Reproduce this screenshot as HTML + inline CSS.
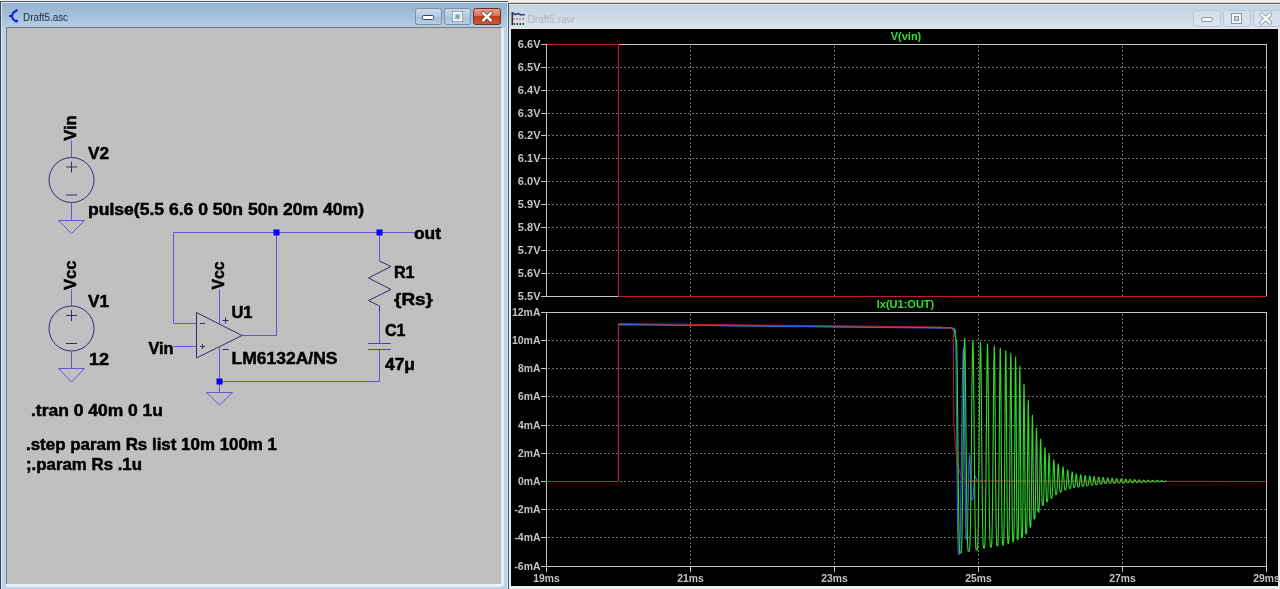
<!DOCTYPE html>
<html><head><meta charset="utf-8">
<style>
html,body{margin:0;padding:0;width:1280px;height:589px;overflow:hidden;background:#f2f0e8;}
body{position:relative;font-family:"Liberation Sans",sans-serif;}
.abs{position:absolute;}
svg{position:absolute;left:0;top:0;will-change:transform;}
</style></head><body>

<svg width="1280" height="589" viewBox="0 0 1280 589" font-family="Liberation Sans, sans-serif">
<defs>
<linearGradient id="tbA" x1="0" y1="0" x2="0" y2="1">
<stop offset="0" stop-color="#93b3d0"/><stop offset="1" stop-color="#b3cde5"/></linearGradient>
<linearGradient id="tbI" x1="0" y1="0" x2="0" y2="1">
<stop offset="0" stop-color="#c3d3e3"/><stop offset="1" stop-color="#d9e3eb"/></linearGradient>
<linearGradient id="btnA" x1="0" y1="0" x2="0" y2="1">
<stop offset="0" stop-color="#c9daec"/><stop offset="0.5" stop-color="#b5cbe2"/><stop offset="0.55" stop-color="#a6bfd9"/><stop offset="1" stop-color="#b9d2ea"/></linearGradient>
<linearGradient id="btnC" x1="0" y1="0" x2="0" y2="1">
<stop offset="0" stop-color="#e8a093"/><stop offset="0.45" stop-color="#d8735f"/><stop offset="0.5" stop-color="#c33c1f"/><stop offset="1" stop-color="#d4582e"/></linearGradient>
<linearGradient id="btnI" x1="0" y1="0" x2="0" y2="1">
<stop offset="0" stop-color="#d3dfeb"/><stop offset="1" stop-color="#d9e4ee"/></linearGradient>
</defs>
<rect x="0" y="0" width="1280" height="589" fill="#f2f0e6"/>
<rect x="0" y="1" width="509" height="588" fill="#bfd0ea"/>
<rect x="0" y="0" width="508" height="1" fill="#f0eef2"/>
<rect x="0" y="1" width="509" height="1" fill="#4e565e"/>
<rect x="0" y="1" width="1" height="588" fill="#3c4a4c"/>
<rect x="1" y="2" width="1" height="587" fill="#d8e8f2"/>
<rect x="508" y="1" width="1" height="588" fill="#3c4a4c"/>
<rect x="507" y="2" width="1" height="587" fill="#d8e8f2"/>
<rect x="1" y="2" width="507" height="1" fill="#e0eaf2"/>
<rect x="2" y="3" width="505" height="24" fill="url(#tbA)"/>
<rect x="6" y="27" width="496" height="558" fill="#727a7e"/>
<rect x="501" y="28" width="3" height="558" fill="#e8eef6"/>
<rect x="7" y="28" width="494" height="556" fill="#c0c0c0"/>
<rect x="6" y="584" width="496" height="3" fill="#e8f0f8"/>
<text x="23" y="21" font-size="10.8" fill="#1e2a36" textLength="45" lengthAdjust="spacingAndGlyphs">Draft5.asc</text>
<path d="M17.5 10 Q12 12.5 12 16 Q12 19.5 16.5 21.5" stroke="#1020e0" stroke-width="2" fill="none"/>
<path d="M9 16 L13 16" stroke="#1020e0" stroke-width="2" /><circle cx="16.5" cy="21" r="1.6" fill="#1020e0"/>
<rect x="415.5" y="8.5" width="26" height="16" rx="2" fill="url(#btnA)" stroke="#7c8fa6" stroke-width="1"/>
<rect x="444.5" y="8.5" width="26" height="16" rx="2" fill="url(#btnA)" stroke="#7c8fa6" stroke-width="1"/>
<rect x="473.5" y="8.5" width="27" height="16" rx="2" fill="url(#btnC)" stroke="#6b2f2a" stroke-width="1"/>
<rect x="422.5" y="15.5" width="11" height="4" rx="1" fill="#ffffff" stroke="#3a4a5c" stroke-width="1"/>
<rect x="452.5" y="11.5" width="10" height="10" fill="none" stroke="#3a4a5c" stroke-width="1"/>
<rect x="453.5" y="12.5" width="8" height="8" fill="none" stroke="#ffffff" stroke-width="2"/>
<rect x="456" y="15" width="3" height="3" fill="#8a9aaa"/>
<path d="M483 13 L491 20.5 M491 13 L483 20.5" stroke="#6a3a32" stroke-width="3.8" stroke-linecap="round"/>
<path d="M483 13 L491 20.5 M491 13 L483 20.5" stroke="#ffffff" stroke-width="2.4" stroke-linecap="round"/>
<path d="M71.5 140.5 L71.5 157.5" stroke="#6356d6" stroke-width="1.0" fill="none"/>
<circle cx="71.5" cy="180" r="22.5" stroke="#2e2e6e" stroke-width="1" fill="none"/>
<path d="M66.0 167 L77.0 167" stroke="#2e2e6e" stroke-width="1.0" fill="none"/>
<path d="M71.5 161.5 L71.5 172.5" stroke="#2e2e6e" stroke-width="1.0" fill="none"/>
<path d="M66.0 195 L77.0 195" stroke="#2e2e6e" stroke-width="1.0" fill="none"/>
<path d="M71.5 202.5 L71.5 220.5" stroke="#6356d6" stroke-width="1.0" fill="none"/>
<path d="M58.5 220.5 L84.5 220.5 L71.5 233.5 Z" stroke="#6356d6" stroke-width="1" fill="none"/>
<text transform="translate(75.8 140.8) rotate(-90)" x="0" y="0" font-size="16.5" font-weight="bold" fill="#000000" stroke="#000000" stroke-width="0.5" textLength="25.5" lengthAdjust="spacingAndGlyphs">Vin</text>
<text x="88" y="158.5" font-size="16.5" font-weight="bold" fill="#000000" stroke="#000000" stroke-width="0.5" textLength="21" lengthAdjust="spacingAndGlyphs">V2</text>
<text x="88" y="215" font-size="16.5" font-weight="bold" fill="#000000" stroke="#000000" stroke-width="0.5" textLength="276" lengthAdjust="spacingAndGlyphs">pulse(5.5 6.6 0 50n 50n 20m 40m)</text>
<path d="M71.5 289.5 L71.5 306.0" stroke="#6356d6" stroke-width="1.0" fill="none"/>
<circle cx="71.5" cy="328.5" r="22.5" stroke="#2e2e6e" stroke-width="1" fill="none"/>
<path d="M66.0 315.5 L77.0 315.5" stroke="#2e2e6e" stroke-width="1.0" fill="none"/>
<path d="M71.5 310.0 L71.5 321.0" stroke="#2e2e6e" stroke-width="1.0" fill="none"/>
<path d="M66.0 343.5 L77.0 343.5" stroke="#2e2e6e" stroke-width="1.0" fill="none"/>
<path d="M71.5 351.0 L71.5 368.5" stroke="#6356d6" stroke-width="1.0" fill="none"/>
<path d="M58.5 368.5 L84.5 368.5 L71.5 382 Z" stroke="#6356d6" stroke-width="1" fill="none"/>
<text transform="translate(75.8 290) rotate(-90)" x="0" y="0" font-size="16.5" font-weight="bold" fill="#000000" stroke="#000000" stroke-width="0.5" textLength="29.5" lengthAdjust="spacingAndGlyphs">Vcc</text>
<text x="88" y="306.5" font-size="16.5" font-weight="bold" fill="#000000" stroke="#000000" stroke-width="0.5" textLength="21" lengthAdjust="spacingAndGlyphs">V1</text>
<text x="89" y="364.5" font-size="16.5" font-weight="bold" fill="#000000" stroke="#000000" stroke-width="0.5" textLength="20" lengthAdjust="spacingAndGlyphs">12</text>
<path d="M414.5 232.5 L173.5 232.5 L173.5 323.5 L196.5 323.5" stroke="#6356d6" stroke-width="1.0" fill="none"/>
<path d="M173.5 346.5 L196.5 346.5" stroke="#6356d6" stroke-width="1.0" fill="none"/>
<path d="M242 335.5 L276.5 335.5 L276.5 232.5" stroke="#6356d6" stroke-width="1.0" fill="none"/>
<path d="M219.5 289.5 L219.5 324" stroke="#6356d6" stroke-width="1.0" fill="none"/>
<path d="M219.5 347 L219.5 392.5" stroke="#6356d6" stroke-width="1.0" fill="none"/>
<path d="M219.5 381.5 L379.5 381.5 L379.5 349.5" stroke="#6356d6" stroke-width="1.0" fill="none"/>
<path d="M379.5 232.5 L379.5 261" stroke="#6356d6" stroke-width="1.0" fill="none"/>
<path d="M196.5 312.5 L196.5 358 L242 335.5 Z" stroke="#2e2e6e" stroke-width="1" fill="none"/>
<path d="M200 323.5 L205 323.5" stroke="#2e2e6e" stroke-width="1.0" fill="none"/>
<path d="M200 346.5 L205 346.5" stroke="#2e2e6e" stroke-width="1.0" fill="none"/>
<path d="M202.5 344 L202.5 349" stroke="#2e2e6e" stroke-width="1.0" fill="none"/>
<path d="M222.5 320.5 L228.5 320.5" stroke="#2e2e6e" stroke-width="1.0" fill="none"/>
<path d="M225.5 317.5 L225.5 323.5" stroke="#2e2e6e" stroke-width="1.0" fill="none"/>
<path d="M222.5 349.5 L228.5 349.5" stroke="#2e2e6e" stroke-width="1.0" fill="none"/>
<path d="M206.5 392.5 L232.5 392.5 L219.5 405 Z" stroke="#6356d6" stroke-width="1" fill="none"/>
<path d="M379.5 261 L391 266.5 L368.5 278 L391 289.5 L368.5 300.5 L379.5 306 L379.5 311" stroke="#2e2e6e" stroke-width="1.0" fill="none"/>
<path d="M379.5 311 L379.5 343" stroke="#6356d6" stroke-width="1.0" fill="none"/>
<path d="M368 343.5 L391 343.5" stroke="#4a42b8" stroke-width="1.0" fill="none"/>
<path d="M368 349.5 L391 349.5" stroke="#4a42b8" stroke-width="1.0" fill="none"/>
<rect x="273.5" y="229.5" width="6" height="6" fill="#0000ff"/>
<rect x="376.5" y="229.5" width="6" height="6" fill="#0000ff"/>
<rect x="216.5" y="378.5" width="6" height="6" fill="#0000ff"/>
<text x="148.5" y="353.5" font-size="16.5" font-weight="bold" fill="#000000" stroke="#000000" stroke-width="0.5" textLength="25" lengthAdjust="spacingAndGlyphs">Vin</text>
<text transform="translate(224.3 289.5) rotate(-90)" x="0" y="0" font-size="16.5" font-weight="bold" fill="#000000" stroke="#000000" stroke-width="0.5" textLength="28" lengthAdjust="spacingAndGlyphs">Vcc</text>
<text x="231.5" y="317.8" font-size="16.5" font-weight="bold" fill="#000000" stroke="#000000" stroke-width="0.5" textLength="21" lengthAdjust="spacingAndGlyphs">U1</text>
<text x="231.5" y="364.2" font-size="16.5" font-weight="bold" fill="#000000" stroke="#000000" stroke-width="0.5" textLength="106" lengthAdjust="spacingAndGlyphs">LM6132A/NS</text>
<text x="414" y="238.8" font-size="16.5" font-weight="bold" fill="#000000" stroke="#000000" stroke-width="0.5" textLength="27" lengthAdjust="spacingAndGlyphs">out</text>
<text x="394" y="278.4" font-size="16.5" font-weight="bold" fill="#000000" stroke="#000000" stroke-width="0.5" textLength="20.5" lengthAdjust="spacingAndGlyphs">R1</text>
<text x="394" y="304.5" font-size="16.5" font-weight="bold" fill="#000000" stroke="#000000" stroke-width="0.5" textLength="39" lengthAdjust="spacingAndGlyphs">{Rs}</text>
<text x="385" y="335.8" font-size="16.5" font-weight="bold" fill="#000000" stroke="#000000" stroke-width="0.5" textLength="20.5" lengthAdjust="spacingAndGlyphs">C1</text>
<text x="385" y="369.7" font-size="16.5" font-weight="bold" fill="#000000" stroke="#000000" stroke-width="0.5" textLength="30" lengthAdjust="spacingAndGlyphs">47μ</text>
<text x="31" y="416.1" font-size="16.5" font-weight="bold" fill="#000000" stroke="#000000" stroke-width="0.5" textLength="132" lengthAdjust="spacingAndGlyphs">.tran 0 40m 0 1u</text>
<text x="26" y="449.8" font-size="16.5" font-weight="bold" fill="#000000" stroke="#000000" stroke-width="0.5" textLength="251" lengthAdjust="spacingAndGlyphs">.step param Rs list 10m 100m 1</text>
<text x="26" y="469.9" font-size="16.5" font-weight="bold" fill="#000000" stroke="#000000" stroke-width="0.5" textLength="116" lengthAdjust="spacingAndGlyphs">;.param Rs .1u</text>
<rect x="508" y="3" width="772" height="586" fill="#d4e4f4"/>
<rect x="508" y="0" width="772" height="3" fill="#f4f2e6"/>
<rect x="508" y="2" width="772" height="1" fill="#cfcfc6"/>
<rect x="508" y="3" width="772" height="1" fill="#606868"/>
<rect x="508" y="3" width="1" height="586" fill="#46545a"/>
<rect x="509" y="4" width="771" height="1" fill="#dde4ec"/>
<rect x="509" y="5" width="771" height="23" fill="url(#tbI)"/>
<rect x="509" y="28" width="771" height="1" fill="#e2e9ef"/>
<rect x="509" y="29" width="2" height="560" fill="#e4ecf4"/>
<rect x="511" y="29" width="767" height="557" fill="#000000"/>
<rect x="1278" y="29" width="2" height="560" fill="#e8eef4"/>
<rect x="509" y="586" width="771" height="3" fill="#e8eef6"/>
<text x="527.5" y="22.7" font-size="10.8" fill="#adb6bf" textLength="46.5" lengthAdjust="spacingAndGlyphs">Draft5.raw</text>
<g><rect x="511.5" y="12" width="1.5" height="13" fill="#2a2a3a"/><path d="M512.5 13 L515 14.5 L518 13.5 L521 15 L525 14.5" stroke="#3a3a70" stroke-width="1.6" fill="none"/><path d="M513 19 L525 19" stroke="#e07878" stroke-width="1.3" stroke-dasharray="2 1"/><path d="M513.5 24 L525 24" stroke="#2a2a3a" stroke-width="2" stroke-dasharray="1.5 1.5"/></g>
<rect x="1193.5" y="10.5" width="27" height="16" rx="3" fill="url(#btnI)" stroke="#b8c6d4" stroke-width="1"/>
<rect x="1223.5" y="10.5" width="27" height="16" rx="3" fill="url(#btnI)" stroke="#b8c6d4" stroke-width="1"/>
<rect x="1253.5" y="10.5" width="27" height="16" rx="3" fill="url(#btnI)" stroke="#b8c6d4" stroke-width="1"/>
<rect x="1201.5" y="17.5" width="11" height="4" rx="1.5" fill="#f4f6f8" stroke="#8a96a2" stroke-width="1"/>
<rect x="1231" y="13" width="11" height="11" fill="#8a96a2"/>
<rect x="1232" y="14" width="9" height="9" fill="#f4f6f8"/>
<rect x="1234" y="16" width="5" height="5" fill="#8a96a2"/>
<rect x="1235" y="17" width="3" height="3" fill="#c8d2dc"/>
<path d="M1261.5 14.5 L1270 22.5 M1270 14.5 L1261.5 22.5" stroke="#8a96a2" stroke-width="4.2" stroke-linecap="round"/>
<path d="M1261.5 14.5 L1270 22.5 M1270 14.5 L1261.5 22.5" stroke="#f4f6f8" stroke-width="2.6" stroke-linecap="round"/>
<g shape-rendering="crispEdges">
<path d="M548.0 67.5 L1266.5 67.5" stroke="#6c6c6c" stroke-width="1" stroke-dasharray="2 2"/>
<path d="M548.0 90.5 L1266.5 90.5" stroke="#6c6c6c" stroke-width="1" stroke-dasharray="2 2"/>
<path d="M548.0 113.5 L1266.5 113.5" stroke="#6c6c6c" stroke-width="1" stroke-dasharray="2 2"/>
<path d="M548.0 135.5 L1266.5 135.5" stroke="#6c6c6c" stroke-width="1" stroke-dasharray="2 2"/>
<path d="M548.0 158.5 L1266.5 158.5" stroke="#6c6c6c" stroke-width="1" stroke-dasharray="2 2"/>
<path d="M548.0 181.5 L1266.5 181.5" stroke="#6c6c6c" stroke-width="1" stroke-dasharray="2 2"/>
<path d="M548.0 204.5 L1266.5 204.5" stroke="#6c6c6c" stroke-width="1" stroke-dasharray="2 2"/>
<path d="M548.0 227.5 L1266.5 227.5" stroke="#6c6c6c" stroke-width="1" stroke-dasharray="2 2"/>
<path d="M548.0 250.5 L1266.5 250.5" stroke="#6c6c6c" stroke-width="1" stroke-dasharray="2 2"/>
<path d="M548.0 273.5 L1266.5 273.5" stroke="#6c6c6c" stroke-width="1" stroke-dasharray="2 2"/>
<path d="M548.0 340.5 L1266.5 340.5" stroke="#6c6c6c" stroke-width="1" stroke-dasharray="2 2"/>
<path d="M548.0 368.5 L1266.5 368.5" stroke="#6c6c6c" stroke-width="1" stroke-dasharray="2 2"/>
<path d="M548.0 396.5 L1266.5 396.5" stroke="#6c6c6c" stroke-width="1" stroke-dasharray="2 2"/>
<path d="M548.0 425.5 L1266.5 425.5" stroke="#6c6c6c" stroke-width="1" stroke-dasharray="2 2"/>
<path d="M548.0 453.5 L1266.5 453.5" stroke="#6c6c6c" stroke-width="1" stroke-dasharray="2 2"/>
<path d="M548.0 481.5 L1266.5 481.5" stroke="#6c6c6c" stroke-width="1" stroke-dasharray="2 2"/>
<path d="M548.0 509.5 L1266.5 509.5" stroke="#6c6c6c" stroke-width="1" stroke-dasharray="2 2"/>
<path d="M548.0 537.5 L1266.5 537.5" stroke="#6c6c6c" stroke-width="1" stroke-dasharray="2 2"/>
<path d="M690.5 46.0 L690.5 296.5" stroke="#6c6c6c" stroke-width="1" stroke-dasharray="2 2"/>
<path d="M690.5 314.0 L690.5 566.5" stroke="#6c6c6c" stroke-width="1" stroke-dasharray="2 2"/>
<path d="M834.5 46.0 L834.5 296.5" stroke="#6c6c6c" stroke-width="1" stroke-dasharray="2 2"/>
<path d="M834.5 314.0 L834.5 566.5" stroke="#6c6c6c" stroke-width="1" stroke-dasharray="2 2"/>
<path d="M978.5 46.0 L978.5 296.5" stroke="#6c6c6c" stroke-width="1" stroke-dasharray="2 2"/>
<path d="M978.5 314.0 L978.5 566.5" stroke="#6c6c6c" stroke-width="1" stroke-dasharray="2 2"/>
<path d="M1122.5 46.0 L1122.5 296.5" stroke="#6c6c6c" stroke-width="1" stroke-dasharray="2 2"/>
<path d="M1122.5 314.0 L1122.5 566.5" stroke="#6c6c6c" stroke-width="1" stroke-dasharray="2 2"/>
<rect x="546.5" y="44.5" width="720.0" height="252.0" fill="none" stroke="#c4c4c4" stroke-width="1"/>
<rect x="546.5" y="312.5" width="720.0" height="254.0" fill="none" stroke="#c4c4c4" stroke-width="1"/>
<path d="M541 44.5 L546.5 44.5" stroke="#c4c4c4" stroke-width="1"/>
<path d="M541 67.5 L546.5 67.5" stroke="#c4c4c4" stroke-width="1"/>
<path d="M541 90.5 L546.5 90.5" stroke="#c4c4c4" stroke-width="1"/>
<path d="M541 113.5 L546.5 113.5" stroke="#c4c4c4" stroke-width="1"/>
<path d="M541 135.5 L546.5 135.5" stroke="#c4c4c4" stroke-width="1"/>
<path d="M541 158.5 L546.5 158.5" stroke="#c4c4c4" stroke-width="1"/>
<path d="M541 181.5 L546.5 181.5" stroke="#c4c4c4" stroke-width="1"/>
<path d="M541 204.5 L546.5 204.5" stroke="#c4c4c4" stroke-width="1"/>
<path d="M541 227.5 L546.5 227.5" stroke="#c4c4c4" stroke-width="1"/>
<path d="M541 250.5 L546.5 250.5" stroke="#c4c4c4" stroke-width="1"/>
<path d="M541 273.5 L546.5 273.5" stroke="#c4c4c4" stroke-width="1"/>
<path d="M541 296.5 L546.5 296.5" stroke="#c4c4c4" stroke-width="1"/>
<path d="M541 312.5 L546.5 312.5" stroke="#c4c4c4" stroke-width="1"/>
<path d="M541 340.5 L546.5 340.5" stroke="#c4c4c4" stroke-width="1"/>
<path d="M541 368.5 L546.5 368.5" stroke="#c4c4c4" stroke-width="1"/>
<path d="M541 396.5 L546.5 396.5" stroke="#c4c4c4" stroke-width="1"/>
<path d="M541 425.5 L546.5 425.5" stroke="#c4c4c4" stroke-width="1"/>
<path d="M541 453.5 L546.5 453.5" stroke="#c4c4c4" stroke-width="1"/>
<path d="M541 481.5 L546.5 481.5" stroke="#c4c4c4" stroke-width="1"/>
<path d="M541 509.5 L546.5 509.5" stroke="#c4c4c4" stroke-width="1"/>
<path d="M541 537.5 L546.5 537.5" stroke="#c4c4c4" stroke-width="1"/>
<path d="M541 566.5 L546.5 566.5" stroke="#c4c4c4" stroke-width="1"/>
<path d="M546.5 566.5 L546.5 572" stroke="#c4c4c4" stroke-width="1"/>
<path d="M690.5 566.5 L690.5 572" stroke="#c4c4c4" stroke-width="1"/>
<path d="M834.5 566.5 L834.5 572" stroke="#c4c4c4" stroke-width="1"/>
<path d="M978.5 566.5 L978.5 572" stroke="#c4c4c4" stroke-width="1"/>
<path d="M1122.5 566.5 L1122.5 572" stroke="#c4c4c4" stroke-width="1"/>
<path d="M1266.5 566.5 L1266.5 572" stroke="#c4c4c4" stroke-width="1"/>
</g>
<g font-size="11" font-weight="bold" fill="#c4c4c4" text-anchor="end">
<text x="540.5" y="48.2">6.6V</text>
<text x="540.5" y="71.2">6.5V</text>
<text x="540.5" y="94.2">6.4V</text>
<text x="540.5" y="117.2">6.3V</text>
<text x="540.5" y="139.2">6.2V</text>
<text x="540.5" y="162.2">6.1V</text>
<text x="540.5" y="185.2">6.0V</text>
<text x="540.5" y="208.2">5.9V</text>
<text x="540.5" y="231.2">5.8V</text>
<text x="540.5" y="254.2">5.7V</text>
<text x="540.5" y="277.2">5.6V</text>
<text x="540.5" y="300.2">5.5V</text>
<text x="540.5" y="316.2" textLength="28.56" lengthAdjust="spacingAndGlyphs">12mA</text>
<text x="540.5" y="344.2" textLength="28.56" lengthAdjust="spacingAndGlyphs">10mA</text>
<text x="540.5" y="372.2" textLength="22.44" lengthAdjust="spacingAndGlyphs">8mA</text>
<text x="540.5" y="400.2" textLength="22.44" lengthAdjust="spacingAndGlyphs">6mA</text>
<text x="540.5" y="429.2" textLength="22.44" lengthAdjust="spacingAndGlyphs">4mA</text>
<text x="540.5" y="457.2" textLength="22.44" lengthAdjust="spacingAndGlyphs">2mA</text>
<text x="540.5" y="485.2" textLength="22.44" lengthAdjust="spacingAndGlyphs">0mA</text>
<text x="540.5" y="513.2" textLength="26.10" lengthAdjust="spacingAndGlyphs">-2mA</text>
<text x="540.5" y="541.2" textLength="26.10" lengthAdjust="spacingAndGlyphs">-4mA</text>
<text x="540.5" y="570.2" textLength="26.10" lengthAdjust="spacingAndGlyphs">-6mA</text>
</g>
<g font-size="11" font-weight="bold" fill="#c4c4c4" text-anchor="middle">
<text x="546.5" y="582" textLength="26.53" lengthAdjust="spacingAndGlyphs">19ms</text>
<text x="690.5" y="582" textLength="26.53" lengthAdjust="spacingAndGlyphs">21ms</text>
<text x="834.5" y="582" textLength="26.53" lengthAdjust="spacingAndGlyphs">23ms</text>
<text x="978.5" y="582" textLength="26.53" lengthAdjust="spacingAndGlyphs">25ms</text>
<text x="1122.5" y="582" textLength="26.53" lengthAdjust="spacingAndGlyphs">27ms</text>
<text x="1266.5" y="582" textLength="26.53" lengthAdjust="spacingAndGlyphs">29ms</text>
</g>
<text x="906" y="40" font-size="11" font-weight="bold" fill="#2ee02e" text-anchor="middle">V(vin)</text>
<text x="905.5" y="308" font-size="11" font-weight="bold" fill="#2ee02e" text-anchor="middle">Ix(U1:OUT)</text>
<g shape-rendering="crispEdges">
<path d="M546.50 44.50 L618.50 44.50 L618.50 296.50 L1266.50 296.50" stroke="#b81c34" stroke-width="1" fill="none" stroke-opacity="1.0" stroke-linejoin="round"/>
</g>
<path d="M618.50 480.00 L618.50 324.50 L951.00 327.80 L954.00 328.50" stroke="#2ed82e" stroke-width="1.1" fill="none" stroke-opacity="1.0" stroke-linejoin="round"/>
<path d="M618.50 480.00 L618.50 324.50 L951.00 328.20 L951.17 328.21 L951.34 328.23 L951.52 328.27 L951.69 328.32 L951.86 328.38 L952.03 328.46 L952.20 328.54 L952.38 328.63 L952.55 328.72 L952.72 328.81 L952.89 328.91 L953.06 329.00 L953.24 329.08 L953.41 329.16 L953.58 329.24 L953.75 329.30 L953.92 329.35 L954.10 329.40 L954.27 329.44 L954.44 329.46 L954.61 329.48 L954.78 329.49 L954.96 329.50 L955.13 329.50 L955.30 329.50 L955.47 331.38 L955.63 336.96 L955.80 346.00 L955.97 358.18 L956.13 373.01 L956.30 389.94 L956.47 408.36 L956.63 427.59 L956.80 446.97 L956.97 465.87 L957.13 483.70 L957.30 499.97 L957.47 514.28 L957.63 526.38 L957.80 536.12 L957.97 543.53 L958.13 548.74 L958.30 552.02 L958.47 553.76 L958.63 554.41 L958.80 554.50 L958.97 554.46 L959.14 554.18 L959.31 553.42 L959.48 551.97 L959.65 549.64 L959.82 546.26 L959.99 541.70 L960.16 535.88 L960.33 528.75 L960.50 520.32 L960.67 510.63 L960.84 499.79 L961.01 487.93 L961.19 475.22 L961.36 461.90 L961.53 448.19 L961.70 434.36 L961.87 420.70 L962.04 407.49 L962.21 395.02 L962.38 383.57 L962.55 373.39 L962.72 364.71 L962.89 357.75 L963.06 352.65 L963.23 349.54 L963.40 348.50 L963.57 350.68 L963.74 357.10 L963.92 367.42 L964.09 381.10 L964.26 397.44 L964.43 415.62 L964.61 434.74 L964.78 453.91 L964.95 472.29 L965.12 489.14 L965.29 503.86 L965.47 516.06 L965.64 525.55 L965.81 532.34 L965.98 536.68 L966.16 539.00 L966.33 539.87 L966.50 540.00 L966.67 539.94 L966.83 539.55 L967.00 538.53 L967.17 536.60 L967.33 533.58 L967.50 529.38 L967.67 523.96 L967.83 517.43 L968.00 509.95 L968.17 501.79 L968.33 493.28 L968.50 484.79 L968.67 476.72 L968.83 469.47 L969.00 463.40 L969.17 458.82 L969.33 455.97 L969.50 455.00 L969.67 455.74 L969.83 457.89 L970.00 461.29 L970.17 465.69 L970.33 470.77 L970.50 476.17 L970.67 481.53 L970.83 486.52 L971.00 490.86 L971.17 494.38 L971.33 496.97 L971.50 498.67 L971.67 499.60 L971.83 499.95 L972.00 500.00 L972.17 499.98 L972.33 499.87 L972.50 499.58 L972.67 499.04 L972.83 498.19 L973.00 497.00 L973.17 495.47 L973.33 493.63 L973.50 491.51 L973.67 489.21 L973.83 486.81 L974.00 484.41 L974.17 482.13 L974.33 480.09 L974.50 478.37 L974.67 477.08 L974.83 476.27 L975.00 476.00 L975.17 476.06 L975.33 476.25 L975.50 476.54 L975.67 476.94 L975.83 477.41 L976.00 477.93 L976.17 478.48 L976.33 479.03 L976.50 479.56 L976.67 480.04 L976.83 480.46 L977.00 480.81 L977.17 481.08 L977.33 481.28 L977.50 481.40 L977.67 481.47 L977.83 481.50 L978.00 481.50" stroke="#3c5ce8" stroke-width="1.1" fill="none" stroke-opacity="1.0" stroke-linejoin="round"/>
<path d="M546.50 481.50 L618.50 481.50 L618.50 323.50 L942.90 327.00 L943.00 328.20 L951.70 328.20 L953.30 332.00 L953.80 420.00 L953.80 420.00 L954.15 426.54 L954.50 432.39 L954.85 437.62 L955.20 442.29 L955.55 446.46 L955.90 450.19 L956.25 453.52 L956.60 456.50 L956.95 459.16 L957.30 461.53 L957.65 463.66 L958.00 465.56 L958.35 467.25 L958.70 468.77 L959.05 470.12 L959.40 471.33 L959.75 472.42 L960.10 473.38 L960.45 474.25 L960.80 475.02 L961.15 475.71 L961.50 476.32 L961.85 476.87 L962.20 477.37 L962.55 477.81 L962.90 478.20 L963.25 478.55 L963.60 478.86 L963.95 479.15 L964.30 479.40 L964.65 479.62 L965.00 479.82 L965.35 480.00 L965.70 480.16 L966.05 480.30 L966.40 480.43 L966.75 480.54 L967.10 480.64 L967.45 480.74 L967.80 480.82 L1266.50 481.50" stroke="#b81c34" stroke-width="1.0" fill="none" stroke-opacity="1.0" stroke-linejoin="round"/>
<path d="M954.00 328.50 L954.17 328.75 L954.33 329.47 L954.50 330.59 L954.67 331.99 L954.83 333.53 L955.00 335.07 L955.17 336.49 L955.33 337.69 L955.50 338.63 L955.67 339.28 L955.83 339.69 L956.00 339.90 L956.17 339.98 L956.33 340.00 L956.50 340.00 L956.67 341.82 L956.83 347.20 L957.00 355.91 L957.17 367.58 L957.33 381.74 L957.50 397.82 L957.67 415.18 L957.83 433.19 L958.00 451.20 L958.17 468.62 L958.33 484.94 L958.50 499.75 L958.67 512.74 L958.83 523.75 L959.00 532.71 L959.17 539.69 L959.33 544.85 L959.50 548.43 L959.67 550.73 L959.83 552.04 L960.00 552.69 L960.17 552.94 L960.33 553.00 L960.50 553.00 L960.67 553.00 L960.84 552.94 L961.01 552.69 L961.18 552.04 L961.35 550.71 L961.52 548.40 L961.70 544.79 L961.87 539.59 L962.04 532.56 L962.21 523.53 L962.38 512.44 L962.55 499.35 L962.72 484.43 L962.89 467.98 L963.06 450.43 L963.23 432.29 L963.40 414.15 L963.58 396.65 L963.75 380.46 L963.92 366.19 L964.09 354.42 L964.26 345.65 L964.43 340.23 L964.60 338.40 L964.77 340.22 L964.95 345.59 L965.12 354.30 L965.29 365.97 L965.46 380.13 L965.64 396.20 L965.81 413.57 L965.98 431.57 L966.16 449.57 L966.33 466.99 L966.50 483.31 L966.67 498.11 L966.85 511.10 L967.02 522.10 L967.19 531.06 L967.37 538.04 L967.54 543.20 L967.71 546.78 L967.89 549.08 L968.06 550.39 L968.23 551.04 L968.40 551.29 L968.58 551.35 L968.75 551.35 L968.92 551.35 L969.10 551.29 L969.27 551.04 L969.44 550.40 L969.61 549.10 L969.79 546.83 L969.96 543.28 L970.13 538.17 L970.31 531.25 L970.48 522.38 L970.65 511.48 L970.83 498.61 L971.00 483.95 L971.17 467.78 L971.34 450.53 L971.52 432.69 L971.69 414.86 L971.86 397.66 L972.04 381.74 L972.21 367.72 L972.38 356.15 L972.55 347.53 L972.73 342.20 L972.90 340.40 L973.07 342.53 L973.25 348.81 L973.42 358.92 L973.59 372.36 L973.76 388.49 L973.94 406.52 L974.11 425.66 L974.28 445.06 L974.45 463.96 L974.63 481.68 L974.80 497.66 L974.97 511.52 L975.15 523.04 L975.32 532.17 L975.49 539.02 L975.66 543.83 L975.84 546.95 L976.01 548.76 L976.18 549.65 L976.35 549.99 L976.53 550.07 L976.70 550.08 L976.87 550.07 L977.05 549.99 L977.22 549.65 L977.39 548.77 L977.56 546.98 L977.74 543.88 L977.91 539.10 L978.08 532.30 L978.25 523.24 L978.43 511.81 L978.60 498.06 L978.77 482.20 L978.95 464.62 L979.12 445.86 L979.29 426.61 L979.46 407.62 L979.64 389.72 L979.81 373.72 L979.98 360.38 L980.15 350.34 L980.33 344.11 L980.50 342.00 L980.67 344.29 L980.83 351.05 L981.00 361.90 L981.17 376.24 L981.33 393.32 L981.50 412.26 L981.67 432.12 L981.83 452.00 L982.00 471.03 L982.17 488.52 L982.33 503.91 L982.50 516.87 L982.67 527.26 L982.83 535.12 L983.00 540.70 L983.17 544.33 L983.33 546.45 L983.50 547.49 L983.67 547.90 L983.83 547.99 L984.00 548.00 L984.17 547.99 L984.33 547.90 L984.50 547.50 L984.67 546.46 L984.83 544.37 L985.00 540.77 L985.17 535.25 L985.33 527.46 L985.50 517.17 L985.67 504.34 L985.83 489.09 L986.00 471.78 L986.17 452.93 L986.33 433.25 L986.50 413.58 L986.67 394.82 L986.83 377.91 L987.00 363.70 L987.17 352.96 L987.33 346.27 L987.50 344.00 L987.67 346.49 L987.84 353.83 L988.01 365.55 L988.18 380.97 L988.35 399.18 L988.52 419.16 L988.69 439.84 L988.86 460.20 L989.03 479.32 L989.20 496.46 L989.37 511.12 L989.54 523.01 L989.71 532.13 L989.88 538.64 L990.05 542.92 L990.22 545.43 L990.39 546.68 L990.56 547.16 L990.73 547.27 L990.90 547.28 L991.07 547.27 L991.24 547.16 L991.41 546.68 L991.58 545.44 L991.75 542.96 L991.92 538.73 L992.09 532.28 L992.26 523.25 L992.43 511.47 L992.60 496.96 L992.77 479.98 L992.94 461.05 L993.11 440.90 L993.28 420.42 L993.45 400.64 L993.62 382.61 L993.79 367.34 L993.96 355.73 L994.13 348.47 L994.30 346.00 L994.47 349.03 L994.63 357.88 L994.80 371.89 L994.97 390.04 L995.13 411.04 L995.30 433.47 L995.47 455.92 L995.63 477.09 L995.80 495.96 L995.97 511.81 L996.13 524.30 L996.30 533.45 L996.47 539.56 L996.63 543.21 L996.80 545.04 L996.97 545.76 L997.13 545.93 L997.30 545.94 L997.47 545.93 L997.63 545.76 L997.80 545.05 L997.97 543.23 L998.13 539.63 L998.30 533.57 L998.47 524.52 L998.63 512.15 L998.80 496.46 L998.97 477.78 L999.13 456.82 L999.30 434.60 L999.47 412.39 L999.63 391.60 L999.80 373.63 L999.97 359.76 L1000.13 351.00 L1000.30 348.00 L1000.47 351.77 L1000.64 362.72 L1000.82 379.82 L1000.99 401.50 L1001.16 425.86 L1001.33 450.89 L1001.50 474.72 L1001.67 495.82 L1001.85 513.17 L1002.02 526.32 L1002.19 535.36 L1002.36 540.87 L1002.53 543.69 L1002.71 544.81 L1002.88 545.08 L1003.05 545.09 L1003.22 545.08 L1003.39 544.81 L1003.57 543.71 L1003.74 540.92 L1003.91 535.49 L1004.08 526.56 L1004.25 513.58 L1004.42 496.45 L1004.60 475.61 L1004.77 452.09 L1004.94 427.37 L1005.11 403.32 L1005.28 381.91 L1005.46 365.03 L1005.63 354.22 L1005.80 350.50 L1005.97 354.69 L1006.13 366.82 L1006.30 385.59 L1006.47 409.07 L1006.63 434.92 L1006.80 460.80 L1006.97 484.61 L1007.13 504.78 L1007.30 520.43 L1007.47 531.41 L1007.63 538.19 L1007.80 541.71 L1007.97 543.11 L1008.13 543.44 L1008.30 543.47 L1008.47 543.44 L1008.63 543.11 L1008.80 541.73 L1008.97 538.25 L1009.13 531.56 L1009.30 520.73 L1009.47 505.28 L1009.63 485.38 L1009.80 461.87 L1009.97 436.33 L1010.13 410.81 L1010.30 387.64 L1010.47 369.11 L1010.63 357.14 L1010.80 353.00 L1010.97 357.70 L1011.14 371.23 L1011.31 391.94 L1011.49 417.39 L1011.66 444.76 L1011.83 471.26 L1012.00 494.60 L1012.17 513.27 L1012.34 526.67 L1012.51 535.11 L1012.69 539.55 L1012.86 541.34 L1013.03 541.77 L1013.20 541.80 L1013.37 541.77 L1013.54 541.35 L1013.71 539.60 L1013.89 535.25 L1014.06 526.99 L1014.23 513.87 L1014.40 495.60 L1014.57 472.75 L1014.74 446.81 L1014.91 420.03 L1015.09 395.12 L1015.26 374.85 L1015.43 361.60 L1015.60 357.00 L1015.77 363.18 L1015.95 380.69 L1016.12 406.65 L1016.30 437.03 L1016.48 467.46 L1016.65 494.19 L1016.83 514.80 L1017.00 528.49 L1017.18 536.00 L1017.35 539.10 L1017.53 539.87 L1017.70 539.92 L1017.88 539.87 L1018.05 539.14 L1018.23 536.19 L1018.40 529.05 L1018.58 516.04 L1018.75 496.44 L1018.92 471.02 L1019.10 442.09 L1019.27 413.21 L1019.45 388.52 L1019.62 371.88 L1019.80 366.00 L1019.97 371.80 L1020.15 388.24 L1020.32 412.62 L1020.50 441.14 L1020.67 469.71 L1020.85 494.81 L1021.02 514.16 L1021.20 527.02 L1021.38 534.07 L1021.55 536.98 L1021.73 537.70 L1021.90 537.75 L1022.07 537.71 L1022.25 537.06 L1022.42 534.46 L1022.60 528.14 L1022.77 516.64 L1022.95 499.31 L1023.12 476.84 L1023.30 451.27 L1023.48 425.74 L1023.65 403.91 L1023.83 389.19 L1024.00 384.00 L1024.18 389.07 L1024.36 403.43 L1024.54 424.73 L1024.72 449.65 L1024.90 474.61 L1025.08 496.55 L1025.25 513.45 L1025.43 524.68 L1025.61 530.84 L1025.79 533.39 L1025.97 534.02 L1026.15 534.06 L1026.33 534.02 L1026.51 533.46 L1026.69 531.19 L1026.87 525.68 L1027.05 515.65 L1027.22 500.55 L1027.40 480.95 L1027.58 458.65 L1027.76 436.39 L1027.94 417.36 L1028.12 404.53 L1028.30 400.00 L1028.47 404.30 L1028.64 416.48 L1028.81 434.55 L1028.98 455.69 L1029.15 476.86 L1029.32 495.47 L1029.50 509.81 L1029.67 519.34 L1029.84 524.56 L1030.01 526.72 L1030.18 527.26 L1030.35 527.29 L1030.52 527.26 L1030.69 526.79 L1030.86 524.88 L1031.03 520.27 L1031.20 511.87 L1031.38 499.22 L1031.55 482.81 L1031.72 464.13 L1031.89 445.48 L1032.06 429.54 L1032.23 418.79 L1032.40 415.00 L1032.57 418.51 L1032.74 428.46 L1032.91 443.23 L1033.08 460.49 L1033.25 477.79 L1033.43 492.99 L1033.60 504.70 L1033.77 512.49 L1033.94 516.76 L1034.11 518.52 L1034.28 518.96 L1034.45 518.99 L1034.62 518.96 L1034.79 518.58 L1034.96 517.03 L1035.13 513.30 L1035.30 506.49 L1035.47 496.24 L1035.65 482.94 L1035.82 467.81 L1035.99 452.70 L1036.16 439.78 L1036.33 431.07 L1036.50 428.00 L1036.67 430.84 L1036.84 438.90 L1037.01 450.85 L1037.18 464.83 L1037.35 478.83 L1037.53 491.14 L1037.70 500.62 L1037.87 506.92 L1038.04 510.38 L1038.21 511.81 L1038.38 512.16 L1038.55 512.19 L1038.72 512.16 L1038.89 511.86 L1039.06 510.62 L1039.23 507.61 L1039.40 502.13 L1039.57 493.89 L1039.75 483.19 L1039.92 471.02 L1040.09 458.87 L1040.26 448.48 L1040.43 441.47 L1040.60 439.00 L1040.77 440.92 L1040.94 446.39 L1041.11 454.66 L1041.28 464.60 L1041.45 474.97 L1041.62 484.59 L1041.78 492.60 L1041.95 498.53 L1042.12 502.35 L1042.29 504.40 L1042.46 505.23 L1042.63 505.44 L1042.80 505.45 L1042.97 505.44 L1043.14 505.26 L1043.31 504.53 L1043.48 502.75 L1043.65 499.42 L1043.82 494.25 L1043.98 487.26 L1044.15 478.87 L1044.32 469.83 L1044.49 461.16 L1044.66 453.95 L1044.83 449.17 L1045.00 447.50 L1045.17 449.33 L1045.34 454.52 L1045.51 462.22 L1045.68 471.23 L1045.85 480.25 L1046.03 488.18 L1046.20 494.29 L1046.37 498.35 L1046.54 500.58 L1046.71 501.50 L1046.88 501.73 L1047.05 501.74 L1047.22 501.73 L1047.39 501.53 L1047.56 500.71 L1047.73 498.73 L1047.90 495.13 L1048.07 489.71 L1048.25 482.67 L1048.42 474.66 L1048.59 466.67 L1048.76 459.83 L1048.93 455.23 L1049.10 453.60 L1049.27 454.71 L1049.44 457.90 L1049.60 462.78 L1049.77 468.78 L1049.94 475.23 L1050.11 481.47 L1050.27 486.97 L1050.44 491.37 L1050.61 494.53 L1050.78 496.52 L1050.95 497.57 L1051.11 497.99 L1051.28 498.09 L1051.45 498.10 L1051.62 498.09 L1051.79 498.00 L1051.95 497.64 L1052.12 496.74 L1052.29 495.02 L1052.46 492.30 L1052.62 488.50 L1052.79 483.75 L1052.96 478.36 L1053.13 472.80 L1053.30 467.62 L1053.46 463.41 L1053.63 460.66 L1053.80 459.70 L1053.97 460.71 L1054.15 463.58 L1054.32 467.91 L1054.49 473.13 L1054.67 478.56 L1054.84 483.61 L1055.01 487.81 L1055.18 490.92 L1055.36 492.93 L1055.53 494.00 L1055.70 494.44 L1055.88 494.55 L1056.05 494.55 L1056.22 494.55 L1056.40 494.45 L1056.57 494.07 L1056.74 493.12 L1056.92 491.35 L1057.09 488.61 L1057.26 484.90 L1057.43 480.45 L1057.61 475.65 L1057.78 471.05 L1057.95 467.22 L1058.13 464.69 L1058.30 463.80 L1058.47 464.50 L1058.64 466.52 L1058.80 469.60 L1058.97 473.39 L1059.14 477.47 L1059.31 481.42 L1059.47 484.90 L1059.64 487.68 L1059.81 489.68 L1059.98 490.93 L1060.15 491.59 L1060.31 491.86 L1060.48 491.92 L1060.65 491.93 L1060.82 491.93 L1060.99 491.87 L1061.15 491.63 L1061.32 491.04 L1061.49 489.92 L1061.66 488.13 L1061.83 485.65 L1061.99 482.54 L1062.16 479.01 L1062.33 475.37 L1062.50 471.98 L1062.66 469.23 L1062.83 467.43 L1063.00 466.80 L1063.17 467.38 L1063.34 469.04 L1063.50 471.59 L1063.67 474.72 L1063.84 478.08 L1064.01 481.34 L1064.17 484.21 L1064.34 486.50 L1064.51 488.15 L1064.68 489.19 L1064.85 489.74 L1065.01 489.96 L1065.18 490.01 L1065.35 490.01 L1065.52 490.01 L1065.69 489.96 L1065.85 489.77 L1066.02 489.30 L1066.19 488.40 L1066.36 486.97 L1066.53 484.98 L1066.69 482.50 L1066.86 479.67 L1067.03 476.76 L1067.20 474.05 L1067.36 471.84 L1067.53 470.40 L1067.70 469.90 L1067.87 470.44 L1068.05 471.97 L1068.22 474.29 L1068.39 477.07 L1068.57 479.97 L1068.74 482.67 L1068.91 484.91 L1069.08 486.57 L1069.26 487.64 L1069.43 488.22 L1069.60 488.45 L1069.78 488.51 L1069.95 488.51 L1070.12 488.51 L1070.30 488.46 L1070.47 488.25 L1070.64 487.73 L1070.82 486.78 L1070.99 485.30 L1071.16 483.30 L1071.33 480.89 L1071.51 478.30 L1071.68 475.81 L1071.85 473.75 L1072.03 472.38 L1072.20 471.90 L1072.37 472.42 L1072.53 473.91 L1072.70 476.11 L1072.87 478.69 L1073.03 481.27 L1073.20 483.54 L1073.37 485.29 L1073.53 486.45 L1073.70 487.09 L1073.87 487.35 L1074.03 487.42 L1074.20 487.42 L1074.37 487.42 L1074.53 487.36 L1074.70 487.14 L1074.87 486.59 L1075.03 485.58 L1075.20 484.07 L1075.37 482.11 L1075.53 479.87 L1075.70 477.64 L1075.87 475.74 L1076.03 474.45 L1076.20 474.00 L1076.37 474.37 L1076.55 475.43 L1076.72 477.04 L1076.89 478.96 L1077.07 480.97 L1077.24 482.84 L1077.41 484.39 L1077.58 485.54 L1077.76 486.29 L1077.93 486.68 L1078.10 486.84 L1078.28 486.88 L1078.45 486.89 L1078.62 486.88 L1078.80 486.85 L1078.97 486.69 L1079.14 486.32 L1079.32 485.62 L1079.49 484.54 L1079.66 483.08 L1079.83 481.32 L1080.01 479.43 L1080.18 477.61 L1080.35 476.10 L1080.53 475.10 L1080.70 474.75 L1080.87 475.08 L1081.05 476.04 L1081.22 477.48 L1081.39 479.21 L1081.57 481.01 L1081.74 482.69 L1081.91 484.08 L1082.08 485.11 L1082.26 485.78 L1082.43 486.13 L1082.60 486.28 L1082.78 486.31 L1082.95 486.32 L1083.12 486.31 L1083.30 486.28 L1083.47 486.14 L1083.64 485.81 L1083.82 485.18 L1083.99 484.21 L1084.16 482.90 L1084.33 481.32 L1084.51 479.62 L1084.68 477.99 L1084.85 476.64 L1085.03 475.74 L1085.20 475.43 L1085.37 475.72 L1085.55 476.57 L1085.72 477.86 L1085.89 479.40 L1086.07 481.01 L1086.24 482.51 L1086.41 483.75 L1086.58 484.67 L1086.76 485.27 L1086.93 485.58 L1087.10 485.71 L1087.28 485.75 L1087.45 485.75 L1087.62 485.75 L1087.80 485.72 L1087.97 485.59 L1088.14 485.29 L1088.32 484.74 L1088.49 483.87 L1088.66 482.70 L1088.83 481.29 L1089.01 479.78 L1089.18 478.32 L1089.35 477.11 L1089.53 476.31 L1089.70 476.03 L1089.87 476.30 L1090.05 477.05 L1090.22 478.19 L1090.39 479.56 L1090.57 480.98 L1090.74 482.31 L1090.91 483.41 L1091.08 484.23 L1091.26 484.75 L1091.43 485.03 L1091.60 485.15 L1091.78 485.18 L1091.95 485.18 L1092.12 485.18 L1092.30 485.15 L1092.47 485.04 L1092.64 484.78 L1092.82 484.28 L1092.99 483.52 L1093.16 482.48 L1093.33 481.23 L1093.51 479.89 L1093.68 478.61 L1093.85 477.54 L1094.03 476.83 L1094.20 476.58 L1094.37 476.81 L1094.55 477.47 L1094.72 478.47 L1094.89 479.67 L1095.07 480.93 L1095.24 482.09 L1095.41 483.06 L1095.58 483.77 L1095.76 484.23 L1095.93 484.48 L1096.10 484.58 L1096.28 484.61 L1096.45 484.61 L1096.62 484.61 L1096.80 484.58 L1096.97 484.49 L1097.14 484.26 L1097.32 483.82 L1097.49 483.15 L1097.66 482.24 L1097.83 481.15 L1098.01 479.98 L1098.18 478.85 L1098.35 477.91 L1098.53 477.29 L1098.70 477.07 L1098.87 477.27 L1099.05 477.85 L1099.22 478.71 L1099.39 479.76 L1099.57 480.84 L1099.74 481.85 L1099.91 482.69 L1100.08 483.31 L1100.26 483.71 L1100.43 483.93 L1100.60 484.02 L1100.78 484.04 L1100.95 484.04 L1101.12 484.04 L1101.30 484.02 L1101.47 483.94 L1101.64 483.73 L1101.82 483.36 L1101.99 482.78 L1102.16 481.99 L1102.33 481.05 L1102.51 480.03 L1102.68 479.05 L1102.85 478.24 L1103.03 477.70 L1103.20 477.51 L1103.37 477.69 L1103.55 478.18 L1103.72 478.92 L1103.89 479.81 L1104.07 480.74 L1104.24 481.60 L1104.41 482.32 L1104.58 482.85 L1104.76 483.19 L1104.93 483.38 L1105.10 483.45 L1105.28 483.47 L1105.45 483.47 L1105.62 483.47 L1105.80 483.45 L1105.97 483.38 L1106.14 483.21 L1106.32 482.89 L1106.49 482.40 L1106.66 481.73 L1106.83 480.92 L1107.01 480.05 L1107.18 479.22 L1107.35 478.53 L1107.53 478.07 L1107.70 477.91 L1107.87 478.07 L1108.05 478.51 L1108.22 479.18 L1108.39 479.98 L1108.57 480.82 L1108.74 481.60 L1108.91 482.24 L1109.08 482.72 L1109.26 483.03 L1109.43 483.20 L1109.60 483.27 L1109.78 483.28 L1109.95 483.28 L1110.12 483.28 L1110.30 483.27 L1110.47 483.20 L1110.64 483.05 L1110.82 482.76 L1110.99 482.31 L1111.16 481.71 L1111.33 480.98 L1111.51 480.20 L1111.68 479.45 L1111.85 478.83 L1112.03 478.42 L1112.20 478.27 L1112.37 478.41 L1112.55 478.81 L1112.72 479.42 L1112.89 480.15 L1113.07 480.91 L1113.24 481.62 L1113.41 482.21 L1113.58 482.64 L1113.76 482.92 L1113.93 483.07 L1114.10 483.13 L1114.28 483.15 L1114.45 483.15 L1114.62 483.15 L1114.80 483.13 L1114.97 483.08 L1115.14 482.94 L1115.32 482.67 L1115.49 482.27 L1115.66 481.72 L1115.83 481.06 L1116.01 480.35 L1116.18 479.67 L1116.35 479.10 L1116.53 478.73 L1116.70 478.59 L1116.87 478.72 L1117.05 479.09 L1117.22 479.64 L1117.39 480.30 L1117.57 480.99 L1117.74 481.63 L1117.91 482.16 L1118.08 482.56 L1118.26 482.81 L1118.43 482.95 L1118.60 483.00 L1118.78 483.01 L1118.95 483.02 L1119.12 483.01 L1119.30 483.00 L1119.47 482.95 L1119.64 482.82 L1119.82 482.59 L1119.99 482.22 L1120.16 481.72 L1120.33 481.12 L1120.51 480.48 L1120.68 479.86 L1120.85 479.34 L1121.03 479.00 L1121.20 478.88 L1121.37 479.00 L1121.55 479.33 L1121.72 479.83 L1121.89 480.42 L1122.07 481.05 L1122.24 481.63 L1122.41 482.11 L1122.58 482.47 L1122.76 482.70 L1122.93 482.82 L1123.10 482.87 L1123.28 482.88 L1123.45 482.88 L1123.62 482.88 L1123.80 482.87 L1123.97 482.82 L1124.14 482.71 L1124.32 482.49 L1124.49 482.16 L1124.66 481.71 L1124.83 481.17 L1125.01 480.59 L1125.18 480.03 L1125.35 479.56 L1125.53 479.25 L1125.70 479.15 L1125.87 479.25 L1126.05 479.55 L1126.22 480.00 L1126.39 480.53 L1126.57 481.10 L1126.74 481.62 L1126.91 482.05 L1127.08 482.37 L1127.26 482.58 L1127.43 482.69 L1127.60 482.74 L1127.78 482.75 L1127.95 482.75 L1128.12 482.75 L1128.30 482.74 L1128.47 482.70 L1128.64 482.59 L1128.82 482.40 L1128.99 482.10 L1129.16 481.69 L1129.33 481.20 L1129.51 480.68 L1129.68 480.18 L1129.85 479.76 L1130.03 479.48 L1130.20 479.38 L1130.37 479.48 L1130.55 479.74 L1130.72 480.14 L1130.89 480.63 L1131.07 481.13 L1131.24 481.60 L1131.41 481.99 L1131.58 482.28 L1131.76 482.46 L1131.93 482.56 L1132.10 482.60 L1132.28 482.61 L1132.45 482.61 L1132.62 482.61 L1132.80 482.60 L1132.97 482.57 L1133.14 482.47 L1133.32 482.30 L1133.49 482.03 L1133.66 481.67 L1133.83 481.23 L1134.01 480.76 L1134.18 480.31 L1134.35 479.93 L1134.53 479.68 L1134.70 479.59 L1134.87 479.68 L1135.05 479.91 L1135.22 480.27 L1135.39 480.71 L1135.57 481.16 L1135.74 481.57 L1135.91 481.92 L1136.08 482.18 L1136.26 482.35 L1136.43 482.44 L1136.60 482.47 L1136.78 482.48 L1136.95 482.48 L1137.12 482.48 L1137.30 482.47 L1137.47 482.44 L1137.64 482.36 L1137.82 482.20 L1137.99 481.96 L1138.16 481.63 L1138.33 481.24 L1138.51 480.82 L1138.68 480.42 L1138.85 480.08 L1139.03 479.86 L1139.20 479.78 L1139.37 479.86 L1139.55 480.07 L1139.72 480.39 L1139.89 480.77 L1140.07 481.17 L1140.24 481.54 L1140.41 481.85 L1140.58 482.08 L1140.76 482.23 L1140.93 482.31 L1141.10 482.34 L1141.28 482.35 L1141.45 482.35 L1141.62 482.35 L1141.80 482.34 L1141.97 482.31 L1142.14 482.24 L1142.32 482.10 L1142.49 481.89 L1142.66 481.60 L1142.83 481.25 L1143.01 480.88 L1143.18 480.52 L1143.35 480.22 L1143.53 480.02 L1143.70 479.96 L1143.87 480.02 L1144.05 480.21 L1144.22 480.49 L1144.39 480.83 L1144.57 481.18 L1144.74 481.51 L1144.91 481.78 L1145.08 481.98 L1145.26 482.11 L1145.43 482.18 L1145.60 482.21 L1145.78 482.21 L1145.95 482.21 L1146.12 482.21 L1146.30 482.21 L1146.47 482.18 L1146.64 482.12 L1146.82 481.99 L1146.99 481.81 L1147.16 481.55 L1147.33 481.25 L1147.51 480.92 L1147.68 480.61 L1147.85 480.34 L1148.03 480.17 L1148.20 480.11 L1148.37 480.17 L1148.55 480.33 L1148.72 480.57 L1148.89 480.87 L1149.07 481.18 L1149.24 481.46 L1149.41 481.70 L1149.58 481.88 L1149.76 481.99 L1149.93 482.05 L1150.10 482.07 L1150.28 482.08 L1150.45 482.08 L1150.62 482.08 L1150.80 482.07 L1150.97 482.05 L1151.14 481.99 L1151.32 481.89 L1151.49 481.73 L1151.66 481.51 L1151.83 481.24 L1152.01 480.95 L1152.18 480.68 L1152.35 480.45 L1152.53 480.30 L1152.70 480.25 L1152.87 480.30 L1153.05 480.44 L1153.22 480.65 L1153.39 480.90 L1153.57 481.17 L1153.74 481.41 L1153.91 481.62 L1154.08 481.77 L1154.26 481.87 L1154.43 481.92 L1154.60 481.94 L1154.78 481.95 L1154.95 481.95 L1155.12 481.95 L1155.30 481.94 L1155.47 481.92 L1155.64 481.87 L1155.82 481.78 L1155.99 481.64 L1156.16 481.45 L1156.33 481.23 L1156.51 480.98 L1156.68 480.74 L1156.85 480.55 L1157.03 480.42 L1157.20 480.37 L1157.37 480.42 L1157.55 480.53 L1157.72 480.71 L1157.89 480.93 L1158.07 481.15 L1158.24 481.36 L1158.41 481.53 L1158.58 481.66 L1158.76 481.75 L1158.93 481.79 L1159.10 481.81 L1159.28 481.81 L1159.45 481.81 L1159.62 481.81 L1159.80 481.81 L1159.97 481.79 L1160.14 481.75 L1160.32 481.68 L1160.49 481.56 L1160.66 481.40 L1160.83 481.20 L1161.01 481.00 L1161.18 480.80 L1161.35 480.63 L1161.53 480.53 L1161.70 480.49 L1161.87 480.52 L1162.05 480.62 L1162.22 480.77 L1162.39 480.95 L1162.57 481.13 L1162.74 481.31 L1162.91 481.45 L1163.08 481.56 L1163.26 481.62 L1163.43 481.66 L1163.60 481.68 L1163.78 481.68 L1163.95 481.68 L1164.12 481.68 L1164.30 481.68 L1164.47 481.66 L1164.64 481.63 L1164.82 481.57 L1164.99 481.47 L1165.16 481.34 L1165.33 481.18 L1165.51 481.01 L1165.68 480.85 L1165.85 480.71 L1166.03 480.62 L1166.20 480.59" stroke="#2ed82e" stroke-width="1.1" fill="none" stroke-opacity="1.0" stroke-linejoin="round"/>
</svg>
</body></html>
